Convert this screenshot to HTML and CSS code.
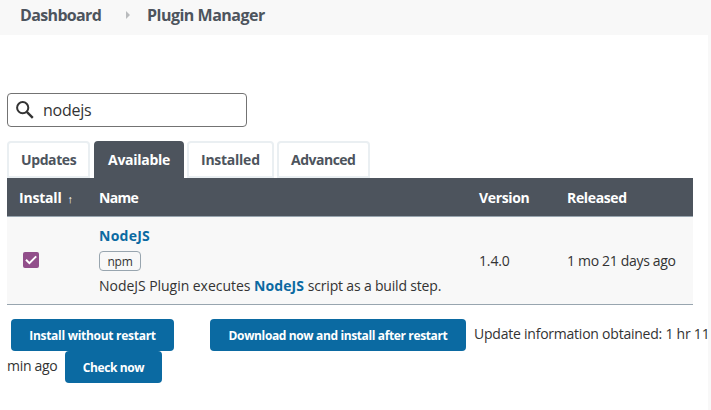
FILE: index.html
```
<!DOCTYPE html>
<html lang="en">
<head>
<meta charset="utf-8">
<title>Plugin Manager</title>
<link rel="stylesheet" href="styles.css">
</head>
<body>
<header class="breadcrumbs">
  <a class="crumb crumb-home">Dashboard</a>
  <svg class="crumb-arrow" width="4" height="8" viewBox="0 0 4 8"><path d="M0 0L4 4L0 8Z" fill="#b9bbbd"/></svg>
  <a class="crumb">Plugin Manager</a>
</header>
<main class="page">
  <div class="search">
    <svg class="search-icon" width="18" height="18" viewBox="0 0 18 18" fill="none" stroke="#333"><circle cx="6.7" cy="6.7" r="5.6" stroke-width="2"/><path d="M10.8 10.8L16.8 16.8" stroke-width="2.4"/></svg>
    <span>nodejs</span>
  </div>
  <nav class="tabs">
    <a class="tab tab-updates">Updates</a>
    <a class="tab tab-available active">Available</a>
    <a class="tab tab-installed">Installed</a>
    <a class="tab tab-advanced">Advanced</a>
  </nav>
  <section class="plugins">
    <div class="row head">
      <div class="install">Install<span class="sort">↑</span></div>
      <div class="name">Name</div>
      <div>Version</div>
      <div>Released</div>
    </div>
    <div class="row plugin">
      <div><span class="checkbox"><svg width="16" height="16" viewBox="0 0 16 16"><path d="M3 7.8L6.4 11.2L13.2 4.4" fill="none" stroke="#fff" stroke-width="2"/></svg></span></div>
      <div class="details">
        <a class="link title">NodeJS</a>
        <span class="tag">npm</span>
        <p class="excerpt"><span class="lead">NodeJS Plugin executes</span> <a class="link">NodeJS</a> <span class="rest">script as a build step.</span></p>
      </div>
      <div class="version">1.4.0</div>
      <div class="released">1 mo 21 days ago</div>
    </div>
  </section>
  <footer class="actions">
    <div class="line">
      <button class="button install-now">Install without restart</button>
      <button class="button download">Download now and install after restart</button>
      <span class="update">Update information obtained: 1 hr 11</span>
    </div>
    <div class="line">
      <span class="ago">min ago</span>
      <button class="button check">Check now</button>
    </div>
  </footer>
</main>
</body>
</html>
```
FILE: styles.css
```
* { box-sizing: border-box; }
body {
  margin: 0;
  height: 410px;
  overflow: hidden;
  background: #f8f8f8;
  color: #333;
  font: 14px/20px "Open Sans", sans-serif;
}
.breadcrumbs {
  display: flex;
  align-items: center;
  height: 35px;
  padding: 0 20px 5px;
  color: #4d545d;
  font-size: 16px;
  font-weight: 700;
}
.crumb { letter-spacing: -0.5px; white-space: nowrap; }
.crumb-home { width: 106px; letter-spacing: -0.65px; }
.crumb-arrow { margin-right: 17px; }
.page {
  width: 708px;
  height: 375px;
  padding: 58px 0 0 7px;
  background: #fff;
}
.search {
  display: flex;
  align-items: center;
  width: 240px;
  height: 34px;
  padding-left: 8px;
  border: 1px solid #737373;
  border-radius: 4px;
  font-size: 16px;
  letter-spacing: -0.25px;
}
.search-icon { margin-right: 9px; }
.tabs {
  display: flex;
  gap: 3px;
  height: 37px;
  margin-top: 14px;
}
.tab {
  width: 83px;
  padding: 7px 0 0 12px;
  border: 2px solid #eaeff2;
  border-radius: 4px 4px 0 0;
  color: #4d545d;
  font-weight: 700;
  letter-spacing: -0.4px;
}
.tab-available { width: 90px; margin: 0 1px; letter-spacing: -0.27px; }
.tab-installed { width: 87px; margin-left: -1px; letter-spacing: -0.25px; }
.tab-advanced { width: 93px; letter-spacing: -0.5px; }
.active { background: #4d545d; border-color: #4d545d; color: #fff; }
.plugins { width: 686px; }
.row {
  display: grid;
  grid-template-columns: 80px 380px 88px 126px;
  align-items: center;
  padding-left: 12px;
}
.head {
  height: 39px;
  padding-top: 2px;
  border-bottom: 1px solid #98a5af;
  background: #4d545d;
  color: #fff;
  font-weight: 700;
  letter-spacing: -0.35px;
}
.install { letter-spacing: -0.2px; }
.name { letter-spacing: -0.7px; }
.sort { margin-left: 6px; font: 11px "Liberation Sans", sans-serif; }
.plugin {
  height: 88px;
  border-bottom: 1px solid #98a5af;
  background: #f8f8f8;
}
.checkbox {
  display: block;
  width: 16px;
  height: 16px;
  margin: -1px 0 0 4px;
  border-radius: 2px;
  background: #924f8b;
}
.checkbox svg { display: block; }
.details {
  display: flex;
  flex-direction: column;
  align-items: flex-start;
}
.link { color: #0b6aa2; font-weight: 700; letter-spacing: 0.1px; }
.title { letter-spacing: 0.25px; }
.tag {
  width: 42px;
  height: 20px;
  margin: 5px 0;
  border: 1px solid #98a5af;
  border-radius: 4px;
  font-size: 12px;
  line-height: 19px;
  text-align: center;
  letter-spacing: -0.3px;
}
.excerpt { margin: 0; white-space: nowrap; }
.lead { letter-spacing: -0.04px; }
.rest { letter-spacing: -0.18px; }
.version { letter-spacing: -0.15px; }
.released { letter-spacing: -0.32px; }
.actions { padding-top: 14px; }
.line { display: flex; height: 32px; white-space: nowrap; }
.button {
  height: 32px;
  padding: 2px 0 0;
  border: 0;
  border-radius: 4px;
  background: #0b6aa2;
  color: #fff;
  font: 700 12px/20px "Open Sans", sans-serif;
}
.install-now { width: 163px; margin: 0 36px 0 4px; letter-spacing: -0.28px; flex-shrink: 0; }
.download { width: 256px; letter-spacing: -0.37px; flex-shrink: 0; }
.check { width: 97px; margin-left: 8px; letter-spacing: -0.38px; }
.update { margin: 5px 0 0 8px; letter-spacing: -0.23px; }
.ago { width: 50px; padding-top: 5px; letter-spacing: -0.3px; }
```
